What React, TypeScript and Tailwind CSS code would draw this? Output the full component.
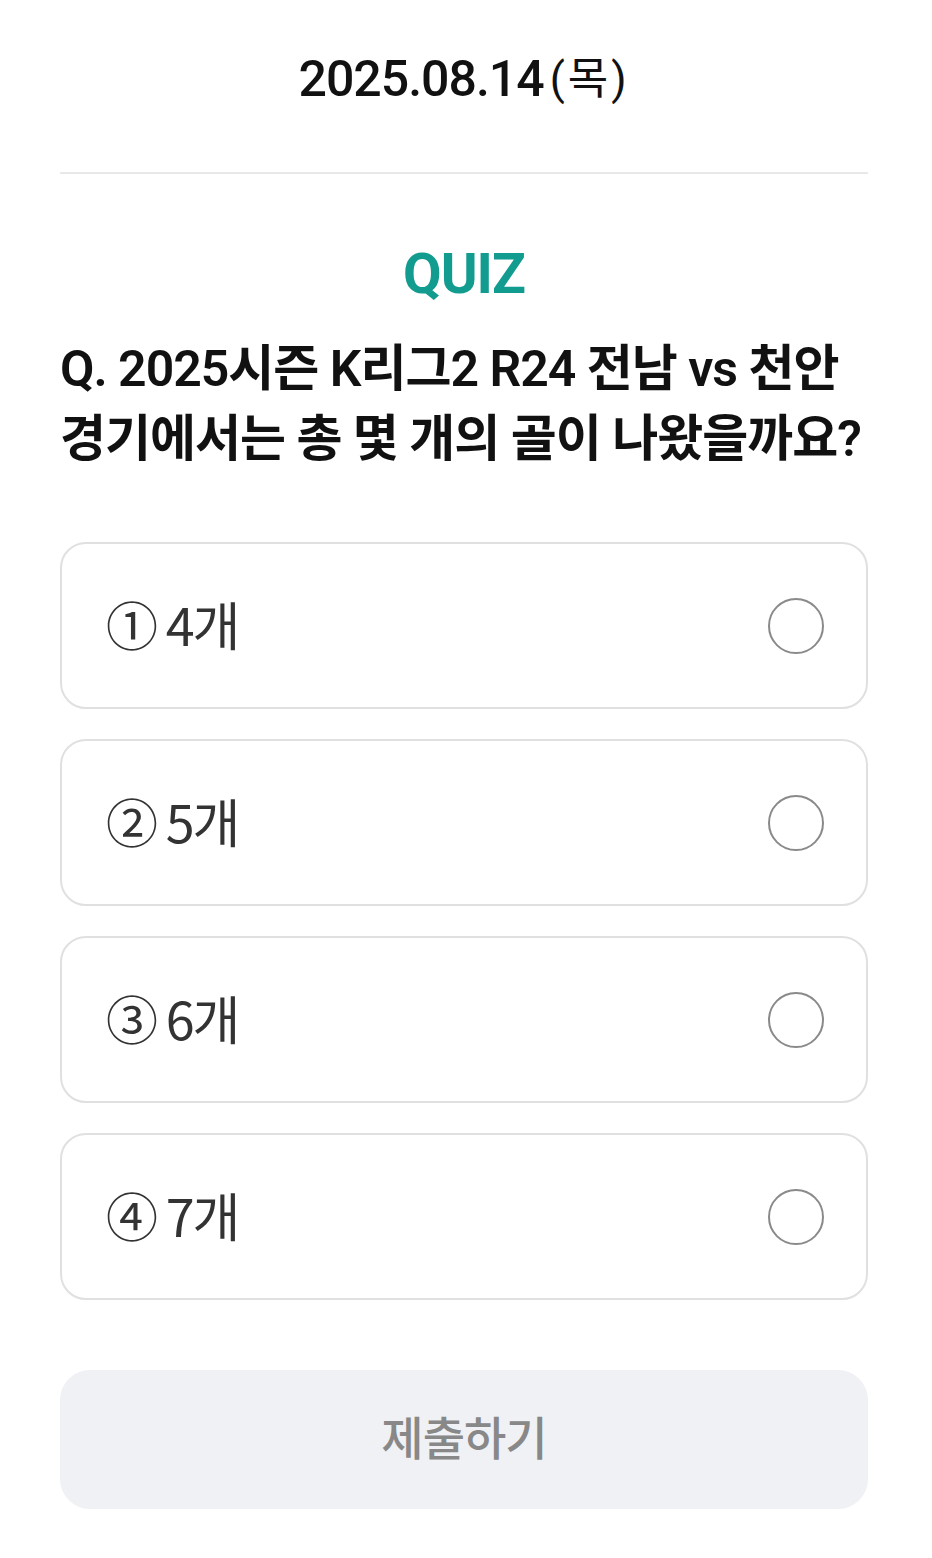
import React from "react";

const font = { fontFamily: 'Roboto, "Noto Sans CJK KR", sans-serif' };
const optFont = { fontFamily: '"Noto Sans CJK KR", Roboto, sans-serif' };

const options = ["① 4개", "② 5개", "③ 6개", "④ 7개"];

export default function App() {
  return (
    <div className="w-[932px] min-h-[1558px] bg-white pl-[60px] pr-[64px]" style={font}>
      <div className="flex h-[174px] items-center justify-center pb-[14px] border-b-2 border-[#e8e8e8]">
        <span className="text-[50px] font-medium tracking-[-1px] text-[#111]">2025.08.14</span>
        <span className="text-[44px] font-normal text-[#111] ml-[6px] tracking-[3px]">(목)</span>
      </div>
      <div className="mt-[64px] text-center text-[56px] font-bold leading-[72px] text-[#129b8f] tracking-[-1px]">QUIZ</div>
      <div className="mt-[24px] text-[50px] font-semibold leading-[70px] text-[#111] tracking-[-1px] whitespace-nowrap">
        Q. 2025시즌 K리그2 R24 전남 vs 천안<br />경기에서는 총 몇 개의 골이 나왔을까요?
      </div>
      <div className="mt-[68px] flex flex-col gap-[30px]">
        {options.map((o) => (
          <div key={o} className="flex h-[167px] items-center justify-between rounded-[26px] border-2 border-[#e0e0e0] pl-[44px] pr-[44px]">
            <span className="text-[52px] font-normal text-[#333] tracking-[-2px] -mt-[4px]" style={optFont}>{o}</span>
            <span className="h-[56px] w-[56px] rounded-full border-2 border-[#8a8a8a] mr-[-2px]" />
          </div>
        ))}
      </div>
      <button className="mt-[70px] flex h-[139px] w-full items-center justify-center rounded-[30px] bg-[#f0f1f4] text-[46px] font-medium text-[#888] tracking-[-1px]">
        제출하기
      </button>
    </div>
  );
}
